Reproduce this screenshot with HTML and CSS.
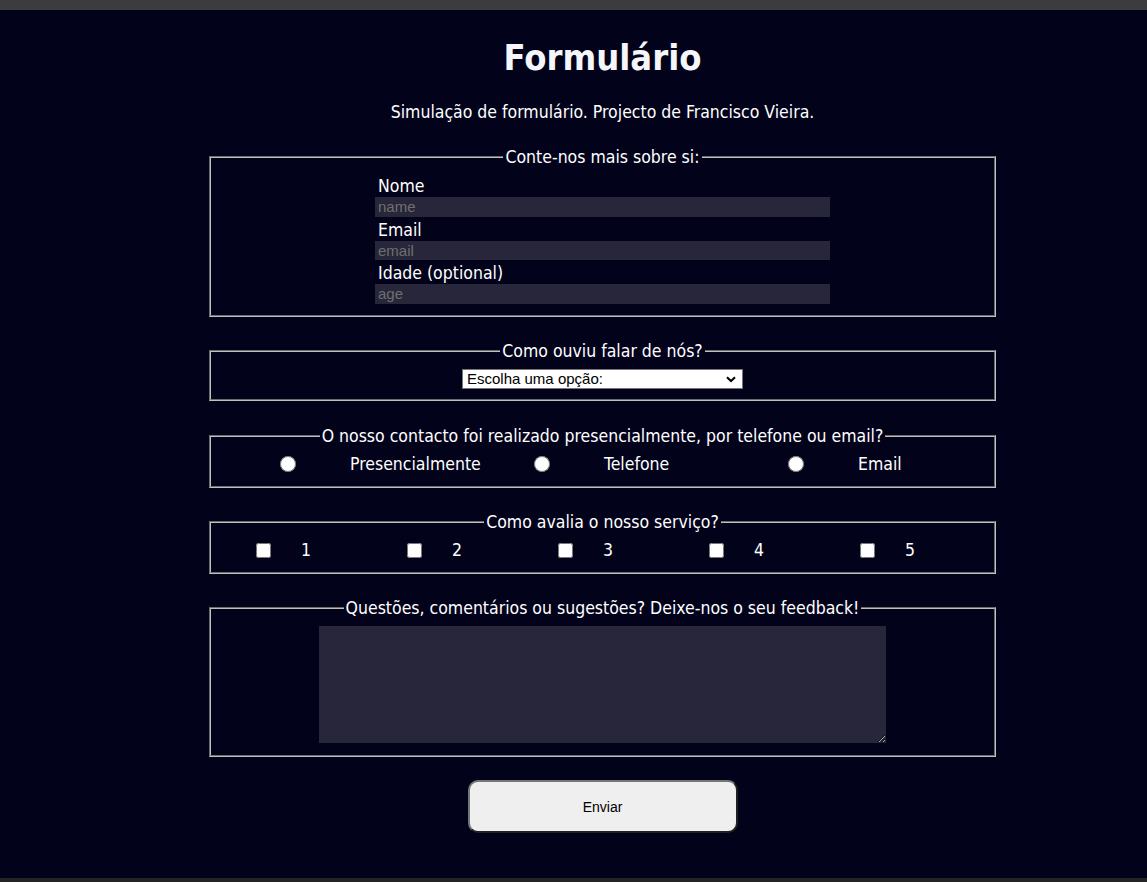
FILE: index.html
```html
<!DOCTYPE html>
<html lang="pt">
<head>
<meta charset="utf-8">
<title>Formulário</title>
<link rel="stylesheet" href="styles.css">
</head>
<body>
<div class="topbar"></div>
<main class="page">
  <h1 class="title">Formulário</h1>
  <p class="subtitle">Simulação de formulário. Projecto de Francisco Vieira.</p>
  <form class="form">
    <fieldset class="group">
      <legend class="legend">Conte-nos mais sobre si:</legend>
      <div class="fields">
        <label class="field-label" for="name">Nome</label>
        <input class="text-input" id="name" type="text" placeholder="name">
        <label class="field-label" for="email">Email</label>
        <input class="text-input" id="email" type="email" placeholder="email">
        <label class="field-label" for="age">Idade (optional)</label>
        <input class="text-input" id="age" type="number" placeholder="age">
      </div>
    </fieldset>

    <fieldset class="group group-select">
      <legend class="legend">Como ouviu falar de nós?</legend>
      <div class="select-wrap">
        <select class="dropdown">
          <option>Escolha uma opção:</option>
          <option>Internet</option>
          <option>Amigos</option>
          <option>Publicidade</option>
        </select>
        <svg class="chevron" width="10" height="7" viewBox="0 0 10 7" aria-hidden="true"><path d="M1 1.2 L5 5 L9 1.2" fill="none" stroke="#000" stroke-width="2"/></svg>
      </div>
    </fieldset>

    <fieldset class="group group-row">
      <legend class="legend">O nosso contacto foi realizado presencialmente, por telefone ou email?</legend>
      <div class="radio-row">
        <div class="radio-opt"><input class="radio" type="radio" name="contact" id="c1"><label class="opt-label" for="c1">Presencialmente</label></div>
        <div class="radio-opt"><input class="radio" type="radio" name="contact" id="c2"><label class="opt-label" for="c2">Telefone</label></div>
        <div class="radio-opt"><input class="radio" type="radio" name="contact" id="c3"><label class="opt-label" for="c3">Email</label></div>
      </div>
    </fieldset>

    <fieldset class="group group-row">
      <legend class="legend">Como avalia o nosso serviço?</legend>
      <div class="check-row">
        <div class="check-opt"><input class="check" type="checkbox" id="r1"><label class="check-label" for="r1">1</label></div>
        <div class="check-opt"><input class="check" type="checkbox" id="r2"><label class="check-label" for="r2">2</label></div>
        <div class="check-opt"><input class="check" type="checkbox" id="r3"><label class="check-label" for="r3">3</label></div>
        <div class="check-opt"><input class="check" type="checkbox" id="r4"><label class="check-label" for="r4">4</label></div>
        <div class="check-opt"><input class="check" type="checkbox" id="r5"><label class="check-label" for="r5">5</label></div>
      </div>
    </fieldset>

    <fieldset class="group group-text">
      <legend class="legend">Questões, comentários ou sugestões? Deixe-nos o seu feedback!</legend>
      <textarea class="feedback"></textarea>
    </fieldset>

    <button class="submit" type="submit">Enviar</button>
  </form>
</main>
<div class="bottombar"></div>
</body>
</html>
```

FILE: styles.css
```css
html, body {
  margin: 0;
  padding: 0;
}

body {
  background: #02021b;
  color: #ffffff;
  font-family: "DejaVu Sans Condensed", "DejaVu Sans", sans-serif;
  font-stretch: condensed;
  font-size: 17.5px;
  min-height: 100vh;
  display: flex;
  flex-direction: column;
}

.topbar {
  height: 10px;
  background: #3c3c3c;
  flex: none;
}

.bottombar {
  height: 4px;
  background: #242424;
  margin-top: auto;
  flex: none;
}

.page {
  width: 787px;
  margin-left: 209px;
}

.title {
  margin: 26px 0 0;
  font-size: 36px;
  line-height: 44px;
  font-weight: bold;
  text-align: center;
  color: #f4f6fa;
}

.subtitle {
  margin: 22px 0 0;
  font-size: 17.5px;
  line-height: 20px;
  text-align: center;
}

.form {
  margin: 0;
}

.group {
  box-sizing: border-box;
  width: 787px;
  margin: 24px 0 0;
  padding: 0;
  border: 2px groove #c0c0c0;
  min-width: 0;
}

.form > .group:first-child {
  margin-top: 25px;
}

.legend {
  margin: 0 auto;
  padding: 0 2px;
  font-size: 17.5px;
  line-height: 20px;
}

.fields {
  width: 455px;
  margin: 0 auto;
  padding: 6px 0 11.5px;
}

.field-label {
  display: block;
  height: 24px;
  line-height: 26px;
  padding-left: 3px;
  font-size: 17.5px;
}

.text-input {
  display: block;
  box-sizing: border-box;
  width: 455px;
  height: 19.5px;
  margin: 0;
  padding: 0 3px;
  border: none;
  outline: none;
  background: #28263a;
  color: #ffffff;
  font-family: "Liberation Sans", Arial, sans-serif;
  font-size: 15px;
}

.text-input::placeholder {
  color: #6f6f6f;
}

.group-select {
  padding: 8px 0 10px;
}

.select-wrap {
  position: relative;
  width: 281px;
  height: 20px;
  margin: 0 auto;
}

.dropdown {
  display: block;
  box-sizing: border-box;
  width: 281px;
  height: 20px;
  margin: 0;
  padding: 0 4px;
  border: 1px solid #767676;
  border-radius: 0;
  background: #ffffff;
  color: #000000;
  font-family: "Liberation Sans", Arial, sans-serif;
  font-size: 15px;
  line-height: 18px;
  appearance: none;
  -webkit-appearance: none;
}

.chevron {
  position: absolute;
  right: 7px;
  top: 7px;
  pointer-events: none;
}

.group-row {
  padding: 6px 0 10px;
}

.group-row:nth-child(3) {
  margin-top: 25px;
}

.radio-row {
  display: flex;
  align-items: center;
  height: 24px;
  padding-left: 69px;
}

.radio-opt {
  display: flex;
  align-items: center;
  width: 254px;
  flex: none;
}

.radio {
  width: 16px;
  height: 16px;
  margin: 0;
}

.opt-label {
  margin-left: 54px;
  font-size: 17.5px;
  line-height: 24px;
}

.check-row {
  display: flex;
  align-items: center;
  height: 24px;
  padding-left: 45px;
}

.check-opt {
  display: flex;
  align-items: center;
  width: 151px;
  flex: none;
}

.check {
  width: 15px;
  height: 15px;
  margin: 0;
}

.check-label {
  margin-left: 30px;
  font-size: 17.5px;
  line-height: 24px;
}

.group-text {
  padding: 8px 0 12px;
}

.feedback {
  display: block;
  box-sizing: border-box;
  width: 567px;
  height: 117px;
  margin: 0 auto;
  border: none;
  outline: none;
  background: #28263a;
  color: #ffffff;
  font-family: "Liberation Sans", Arial, sans-serif;
  font-size: 14px;
}

.submit {
  display: block;
  box-sizing: border-box;
  width: 270px;
  height: 53px;
  margin: 23px auto 0;
  border: 2px outset #767676;
  border-radius: 10px;
  background: #efefef;
  color: #000000;
  font-family: "Liberation Sans", Arial, sans-serif;
  font-size: 14px;
}
```
